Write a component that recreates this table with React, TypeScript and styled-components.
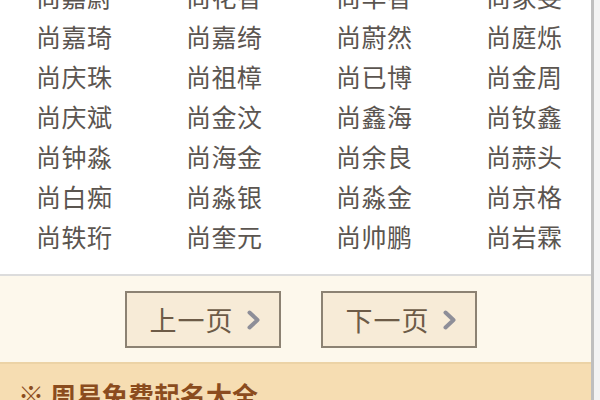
import React from "react";
import styled, {createGlobalStyle} from "styled-components";

const GlobalStyle = createGlobalStyle`
  html, body {
    margin: 0;
    padding: 0;
    background: #f3f3f3;
  }
  body {
    font-family: "Noto Sans CJK SC", "Noto Sans", sans-serif;
  }
`

const Page = styled.div`
  width: 600px;
  height: 400px;
  overflow: hidden;
  display: flex;
  background: #f3f3f3;
`

const Column = styled.div`
  width: 591px;
  border-right: 3px solid #bfbfbf;
  display: flex;
  flex-direction: column;
`

const NamePanel = styled.div`
  flex-shrink: 0;
  background: #ffffff;
  height: 274px;
  border-bottom: 2px solid #dcdcdc;
  overflow: hidden;
`

const NameGrid = styled.div`
  display: grid;
  grid-template-columns: repeat(4, 150px);
  margin-top: -24px;
  padding-left: 36px;
`

const Name = styled.span`
  font-size: 25px;
  line-height: 40px;
  height: 40px;
  color: #5b5550;
  letter-spacing: 0.5px;
  white-space: nowrap;
`

const Pager = styled.div`
  flex-shrink: 0;
  background: #fdf8ec;
  height: 86px;
  display: flex;
  align-items: center;
  gap: 40px;
  padding-left: 125px;
`

const PageButton = styled.div`
  box-sizing: border-box;
  width: 156px;
  height: 57px;
  border: 2px solid #8c8273;
  background: #f7ebd7;
  display: flex;
  align-items: center;
  justify-content: center;
  gap: 12px;
  padding-left: 4px;
  color: #6d5b47;
  font-size: 27px;
  letter-spacing: 1px;
`

const Chevron = styled.svg`
  width: 15px;
  height: 20px;
  margin-top: 2px;
`

const Footer = styled.div`
  flex: 1;
  min-height: 0;
  background: #f6ddb2;
  border-top: 2px solid #ecd3a6;
  padding: 14px 0 0 18px;
`

const FooterTitle = styled.div`
  color: #8b4c1e;
  font-size: 26px;
  font-weight: 700;
  line-height: 34px;
  white-space: nowrap;
`

const names = [
  "尚嘉蔚", "尚花香", "尚华香", "尚家雯",
  "尚嘉琦", "尚嘉绮", "尚蔚然", "尚庭烁",
  "尚庆珠", "尚祖樟", "尚已博", "尚金周",
  "尚庆斌", "尚金汶", "尚鑫海", "尚钕鑫",
  "尚钟淼", "尚海金", "尚余良", "尚蒜头",
  "尚白痴", "尚淼银", "尚淼金", "尚京格",
  "尚轶珩", "尚奎元", "尚帅鹏", "尚岩霖",
]

const Arrow = () => (
  <Chevron viewBox="0 0 15 20">
    <path d="M3.5 2.5 L11.5 10 L3.5 17.5" fill="none" stroke="#8e8e98" strokeWidth="4" strokeLinecap="round" strokeLinejoin="round" />
  </Chevron>
)

export default function App() {
  return (
    <Page>
      <GlobalStyle />
      <Column>
        <NamePanel>
          <NameGrid>
            {names.map((n, i) => <Name key={i}>{n}</Name>)}
          </NameGrid>
        </NamePanel>
        <Pager>
          <PageButton>上一页<Arrow /></PageButton>
          <PageButton>下一页<Arrow /></PageButton>
        </Pager>
        <Footer>
          <FooterTitle>※ 周易免费起名大全</FooterTitle>
        </Footer>
      </Column>
    </Page>
  )
}
